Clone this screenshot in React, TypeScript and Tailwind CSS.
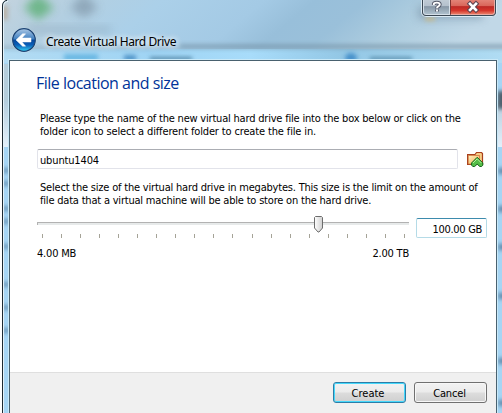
import React from "react";

const ui = "font-['DejaVu_Sans_Condensed','DejaVu_Sans',sans-serif] [font-stretch:condensed]";

function BackIcon() {
  return (
    <svg width="26" height="26" viewBox="0 0 26 26" className="block shrink-0">
      <defs>
        <linearGradient id="orb" x1="0" y1="0" x2="0" y2="1">
          <stop offset="0" stopColor="#a9c6e4" />
          <stop offset=".46" stopColor="#3f7fc0" />
          <stop offset=".5" stopColor="#07479b" />
          <stop offset=".72" stopColor="#0a5fb8" />
          <stop offset="1" stopColor="#34d2f5" />
        </linearGradient>
      </defs>
      <circle cx="13" cy="13" r="12.3" fill="#d9e9f4" fillOpacity=".75" />
      <circle cx="13" cy="13" r="11.3" fill="url(#orb)" stroke="#1d4474" strokeWidth="1.2" />
      <path d="M5 13 L11.6 6.8 H14.6 L11 11 H20 V15 H11 L14.6 19.2 H11.6 Z" fill="#fff" stroke="#fff" strokeWidth=".5" />
    </svg>
  );
}

function FolderIcon() {
  return (
    <svg width="17" height="17" viewBox="0 0 17 17" className="block shrink-0">
      <defs>
        <linearGradient id="fold" x1="0" y1="0" x2="1" y2="1">
          <stop offset="0" stopColor="#fff3c4" />
          <stop offset="1" stopColor="#f0a848" />
        </linearGradient>
      </defs>
      <path d="M.6 13.5 V3.5 H8 L9.5 1.5 H14.5 L15.5 2.5 V13.5 Z" fill="#f7cd86" stroke="#a83f1c" strokeWidth="1.2" />
      <path d="M1.3 4.5 H12.5 V13 H1.3 Z" fill="url(#fold)" stroke="#c86a35" strokeWidth=".7" />
      <path d="M10.2 6.3 L15.8 11.9 V14.2 L14.6 15.5 H12.8 L10.2 13.2 L7.6 15.5 H5.8 L4.6 14.2 V11.9 Z" fill="#55bd48" stroke="#17671d" strokeWidth="1" />
      <path d="M10.2 7.8 L6 12 M10.2 7.8 L14.4 12" stroke="#b5f39b" strokeWidth="1" />
    </svg>
  );
}

function Thumb() {
  return (
    <svg width="10" height="18" viewBox="0 0 10 18" className="absolute left-[276px] top-[-7px]">
      <defs>
        <linearGradient id="thumb" x1="0" y1="0" x2="1" y2="0">
          <stop offset="0" stopColor="#fff" />
          <stop offset="1" stopColor="#cfcfcf" />
        </linearGradient>
      </defs>
      <path d="M1.5 .5 H7.5 L8.5 1.5 V12 L5 16 H4 L.5 12 V1.5 Z" fill="url(#thumb)" stroke="#6c6c6c" />
    </svg>
  );
}

function CaptionButtons() {
  return (
    <div className="ml-auto flex h-[17px] w-[76px] shrink-0 overflow-hidden rounded-b-[5px] border border-t-0 border-[#dcebf5] bg-[#3b4854] p-px pt-0">
      <div className="flex w-[27px] justify-center rounded-bl-[3px] border border-t-0 border-[#d5dfe8] bg-[linear-gradient(#c0cbd5_0%,#b4c0cc_43%,#8797a6_47%,#adbfcc_100%)]">
        <svg width="12" height="14" viewBox="0 0 12 14">
          <path d="M2.8 4.9 V4 Q3 2.6 5.8 2.6 Q8.8 2.6 8.8 4.6 Q8.8 5.8 7.3 6.4 Q6 7 6 8.4 M6 9.6 V11.6" fill="none" stroke="#535868" strokeWidth="3.8" />
          <path d="M2.8 4.9 V4 Q3 2.6 5.8 2.6 Q8.8 2.6 8.8 4.6 Q8.8 5.8 7.3 6.4 Q6 7 6 8.2 M6 9.6 V11.4" fill="none" stroke="#fff" strokeWidth="1.9" />
        </svg>
      </div>
      <div className="flex flex-1 justify-center rounded-br-[3px] border border-t-0 border-[#e9aaa2] border-l-[#803431] bg-[linear-gradient(#e38377_0%,#d96559_43%,#bd2925_47%,#d5362c_75%,#e97b65_100%)]">
        <svg width="14" height="14" viewBox="0 0 14 14">
          <path d="M4 3.8 L10 10 M10 3.8 L4 10" stroke="#5b4351" strokeWidth="4.6" strokeLinecap="square" />
          <path d="M4 3.8 L10 10 M10 3.8 L4 10" stroke="#fff" strokeWidth="2.6" strokeLinecap="square" />
        </svg>
      </div>
    </div>
  );
}

function Glass() {
  return (
    <svg width="502" height="413" viewBox="0 0 502 413" className="col-start-1 row-start-1 block">
      <defs>
        <linearGradient id="sheen" x1="0" y1="0" x2="1" y2="0.12">
          <stop offset="0" stopColor="#c3d3de" />
          <stop offset=".16" stopColor="#b3cfe1" />
          <stop offset=".32" stopColor="#abd0e9" />
          <stop offset=".52" stopColor="#a4cae5" />
          <stop offset=".62" stopColor="#98bfda" />
          <stop offset=".72" stopColor="#9ac0da" />
          <stop offset=".85" stopColor="#aecddf" />
          <stop offset="1" stopColor="#c1d8e7" />
        </linearGradient>
        <linearGradient id="under" x1="0" y1="0" x2="1" y2="0">
          <stop offset="0" stopColor="#b4dcf3" />
          <stop offset=".3" stopColor="#9fd4f4" />
          <stop offset=".5" stopColor="#a8dcfa" />
          <stop offset=".68" stopColor="#93c7e5" />
          <stop offset="1" stopColor="#b0dcf3" />
        </linearGradient>
        <linearGradient id="band" x1="0" y1="0" x2="0" y2="1">
          <stop offset="0" stopColor="#b4cddd" />
          <stop offset="1" stopColor="#e4f0fa" />
        </linearGradient>
        <filter id="soft" x="-100%" y="-100%" width="300%" height="300%"><feGaussianBlur stdDeviation="4.5" /></filter>
        <filter id="fine" x="-100%" y="-200%" width="300%" height="500%"><feGaussianBlur stdDeviation="2" /></filter>
        <clipPath id="frame"><path d="M2 413 V6 Q2 0 8 0 H502 V413 Z" /></clipPath>
      </defs>
      <rect width="502" height="413" fill="#fff" />
      <g clipPath="url(#frame)">
        <rect width="502" height="413" fill="#a6d5f4" />
        <rect width="502" height="50" fill="url(#sheen)" />
        <rect y="49" width="502" height="14" fill="url(#under)" />
        <rect x="180" y="44" width="340" height="5" fill="#7795a9" opacity=".65" filter="url(#fine)" />
        <rect x="0" y="46" width="180" height="4" fill="#86a5ba" opacity=".45" filter="url(#fine)" />
        <path d="M38 -6 L54 8 L38 20 L24 8 Z" fill="#67b482" opacity=".9" filter="url(#soft)" />
        <path d="M84 -6 L98 8 L84 18 L70 8 Z" fill="#879fb1" opacity=".8" filter="url(#soft)" />
        <rect x="0" y="6" width="8" height="14" fill="#b4987a" opacity=".5" filter="url(#fine)" />
        <rect x="26" y="27" width="85" height="5" fill="#7890a2" opacity=".4" filter="url(#soft)" />
        <rect x="64" y="54" width="34" height="7" fill="#5cb0df" opacity=".8" filter="url(#fine)" />
        <rect x="124" y="55" width="12" height="6" fill="#357fba" opacity=".75" filter="url(#fine)" />
        <rect x="150" y="57" width="42" height="4" fill="#3f7292" opacity=".75" filter="url(#fine)" />
        <ellipse cx="351" cy="58" rx="6" ry="5" fill="#3484c4" opacity=".8" filter="url(#fine)" />
        <rect x="370" y="57" width="42" height="4" fill="#437898" opacity=".7" filter="url(#fine)" />
        <rect x="418" y="6" width="65" height="13" fill="#7890a6" opacity=".6" filter="url(#soft)" />
        <rect x="425" y="17" width="10" height="4" fill="#d1b878" opacity=".7" filter="url(#fine)" />
        <rect y="64" width="10" height="37" fill="#b5cddb" />
        <rect y="101" width="502" height="46" fill="url(#band)" />
        <rect x="497" y="91" width="12" height="18" fill="#4d606d" filter="url(#fine)" />
        {[170, 183, 208, 221, 246, 284, 307, 330].map((y) => (
          <rect key={y} x="3" y={y - 2} width="6" height="5" fill="#476e90" opacity=".65" filter="url(#fine)" />
        ))}
        {[170, 208, 246, 295, 360, 402].map((y) => (
          <rect key={y} x="498" y={y - 2} width="8" height="6" fill="#476e90" opacity=".75" filter="url(#fine)" />
        ))}
      </g>
      <path d="M2.5 413 V6 Q2.5 1 7 .3" fill="none" stroke="#1c2931" />
      <path d="M3.5 413 V7 Q3.5 2 8 1.3" fill="none" stroke="#e5f3fa" />
    </svg>
  );
}

export default function App() {
  return (
    <div className={`grid h-[413px] w-[502px] overflow-hidden bg-white text-[11px] leading-[13px] text-black ${ui}`}>
      <Glass />
      <div className="z-10 col-start-1 row-start-1 flex h-[413px] w-[497px] flex-col pl-[9px]">
        <div className="flex h-[60px] shrink-0 items-start pl-[2px]">
          <div className="flex items-center gap-[9px] pt-[27px]">
            <BackIcon />
            <div className="whitespace-nowrap pt-[3px] font-['Noto_Sans',sans-serif] text-[12px] leading-[17px] tracking-[-0.42px] [text-shadow:0_0_6px_white,0_0_6px_white]">Create Virtual Hard Drive</div>
          </div>
          <CaptionButtons />
        </div>
        <div className="flex w-[488px] flex-1 flex-col border-x border-t border-[#49616f] bg-white shadow-[0_0_0_1px_#c9e9f8]">
          <div className="h-[311px] pl-[26px] pt-[11px]">
            <h1 className="h-[22px] whitespace-nowrap font-['Open_Sans','Noto_Sans',sans-serif] text-[16px] leading-[22px] tracking-[-0.5px] text-[#003399] [font-stretch:normal]">File location and size</h1>
            <div className="ml-[4px] mt-[18px] whitespace-nowrap">
              <p className="tracking-[-0.2px]">Please type the name of the new virtual hard drive file into the box below or click on the</p>
              <p className="tracking-[-0.14px]">folder icon to select a different folder to create the file in.</p>
            </div>
            <div className="ml-px mt-[11px] flex items-center gap-[9px]">
              <div className="flex h-[20px] w-[421px] items-center rounded-[2px] border border-[#e2e3ea] border-t-[#abadb3] pl-[2px] pt-[2px] tracking-[-0.15px]">ubuntu1404</div>
              <FolderIcon />
            </div>
            <div className="ml-[4px] mt-[12px] whitespace-nowrap tracking-[-0.2px]">
              <p>Select the size of the virtual hard drive in megabytes. This size is the limit on the amount of</p>
              <p>file data that a virtual machine will be able to store on the hard drive.</p>
            </div>
            <div className="ml-px mt-[11px] flex items-start gap-[7px]">
              <div className="w-[372px] pt-[4px]">
                <div className="relative h-[3px] border border-b-0 border-r-0 border-[#b2b2b2] bg-[#e7eaea]">
                  <Thumb />
                </div>
                <div className="ml-[5px] mt-[9px] flex w-[363px] justify-between">
                  {Array.from({ length: 20 }, (_, i) => <i key={i} className="h-[4px] w-px bg-[#a5a397]" />)}
                </div>
                <div className="mt-[9px] flex justify-between"><span className="tracking-[-0.2px]">4.00 MB</span><span className="tracking-[-0.2px]">2.00 TB</span></div>
              </div>
              <div className="flex h-[20px] w-[71px] items-center justify-end rounded-[2px] border border-[#b5dbe7] border-t-[#3d8bad] pr-[4px] pt-[2px] tracking-[-0.3px]">100.00 GB</div>
            </div>
          </div>
          <div className="flex flex-1 justify-end gap-[8px] border-t border-[#dfdfdf] bg-[#f0f0f0] pr-[9px] pt-[9px]">
            <button className="h-[21px] w-[73px] rounded-[3px] border border-[#2c7da7] bg-[linear-gradient(#f2f2f2_0%,#ebebeb_48%,#dcdcdc_52%,#cfcfcf_100%)] pr-[3px] pt-px shadow-[inset_0_0_0_1px_#45d8fb]">Create</button>
            <button className="h-[21px] w-[73px] rounded-[3px] border border-[#707070] bg-[linear-gradient(#f2f2f2_0%,#ebebeb_48%,#dddddd_52%,#cfcfcf_100%)] pr-[2px] pt-px shadow-[inset_0_0_0_1px_#f7f7f7] tracking-[-0.15px]">Cancel</button>
          </div>
        </div>
      </div>
    </div>
  );
}
